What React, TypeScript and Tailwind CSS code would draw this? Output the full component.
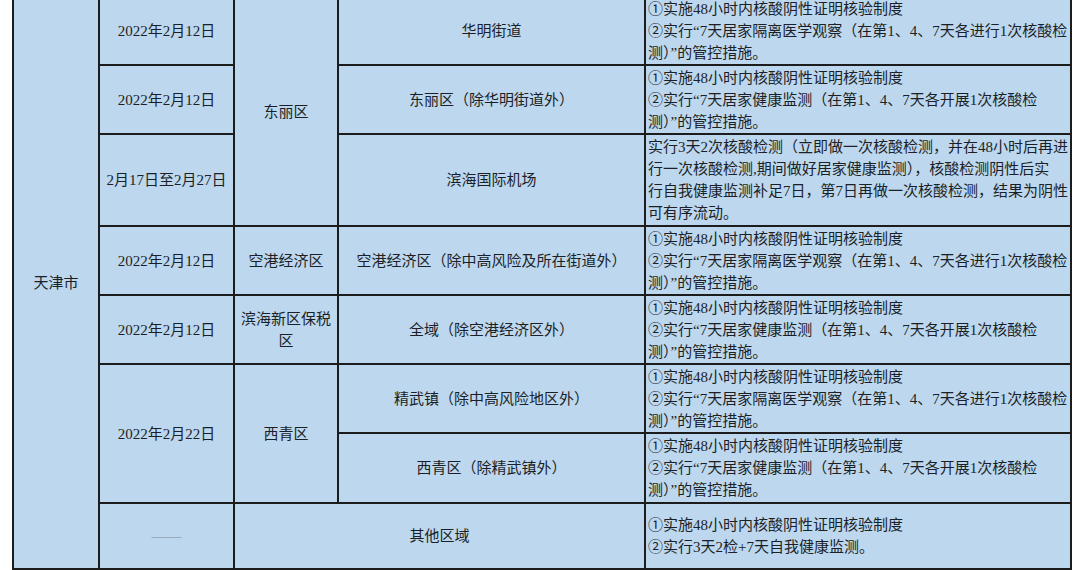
import React from "react";

const cell = "border-2 border-[#1c1c1c] align-middle";
const center = `${cell} text-center`;

const Lines = ({ lines, top }: { lines: string[]; top?: boolean }) => (
  <td className={`${cell} pl-[2px] text-left ${top ? "border-t-0" : ""}`}>
    {lines.map((l, i) => (
      <div key={i} className="whitespace-nowrap">
        {l}
      </div>
    ))}
  </td>
);

const quarantine = [
  "①实施48小时内核酸阴性证明核验制度",
  "②实行“7天居家隔离医学观察（在第1、4、7天各进行1次核酸检",
  "测）”的管控措施。",
];

const health = [
  "①实施48小时内核酸阴性证明核验制度",
  "②实行“7天居家健康监测（在第1、4、7天各开展1次核酸检",
  "测）”的管控措施。",
];

const airport = [
  "实行3天2次核酸检测（立即做一次核酸检测，并在48小时后再进",
  "行一次核酸检测,期间做好居家健康监测），核酸检测阴性后实",
  "行自我健康监测补足7日，第7日再做一次核酸检测，结果为阴性",
  "可有序流动。",
];

const others = ["①实施48小时内核酸阴性证明核验制度", "②实行3天2检+7天自我健康监测。"];

export default function App() {
  return (
    <div className="w-[1080px] h-[570px] overflow-hidden bg-white">
      <table
        className="ml-[12px] mt-[-2px] w-[1060px] table-fixed border-collapse bg-[#bdd7ee] text-[15px] leading-[22px] text-[#1b1f27]"
        style={{ fontFamily: '"Liberation Serif", "Noto Sans CJK SC", serif' }}
      >
        <colgroup>
          <col className="w-[86px]" />
          <col className="w-[135px]" />
          <col className="w-[104px]" />
          <col className="w-[307px]" />
          <col />
        </colgroup>
        <tbody>
          <tr className="h-[66px]">
            <td rowSpan={8} className={`${center} border-t-0`}>
              天津市
            </td>
            <td className={`${center} border-t-0`}>2022年2月12日</td>
            <td rowSpan={3} className={`${center} border-t-0`}>
              东丽区
            </td>
            <td className={`${center} border-t-0`}>华明街道</td>
            <Lines lines={quarantine} top />
          </tr>
          <tr className="h-[69px]">
            <td className={center}>2022年2月12日</td>
            <td className={center}>东丽区（除华明街道外）</td>
            <Lines lines={health} />
          </tr>
          <tr className="h-[92px]">
            <td className={center}>2月17日至2月27日</td>
            <td className={center}>滨海国际机场</td>
            <Lines lines={airport} />
          </tr>
          <tr className="h-[69px]">
            <td className={center}>2022年2月12日</td>
            <td className={center}>空港经济区</td>
            <td className={center}>空港经济区（除中高风险及所在街道外）</td>
            <Lines lines={quarantine} />
          </tr>
          <tr className="h-[69px]">
            <td className={center}>2022年2月12日</td>
            <td className={center}>
              滨海新区保税
              <br />区
            </td>
            <td className={center}>全域（除空港经济区外）</td>
            <Lines lines={health} />
          </tr>
          <tr className="h-[69px]">
            <td rowSpan={2} className={center}>
              2022年2月22日
            </td>
            <td rowSpan={2} className={center}>
              西青区
            </td>
            <td className={center}>精武镇（除中高风险地区外）</td>
            <Lines lines={quarantine} />
          </tr>
          <tr className="h-[70px]">
            <td className={center}>西青区（除精武镇外）</td>
            <Lines lines={health} />
          </tr>
          <tr className="h-[66px]">
            <td className={`${center} text-[#7d8794]`}>——</td>
            <td colSpan={2} className={center}>
              其他区域
            </td>
            <Lines lines={others} />
          </tr>
        </tbody>
      </table>
    </div>
  );
}
